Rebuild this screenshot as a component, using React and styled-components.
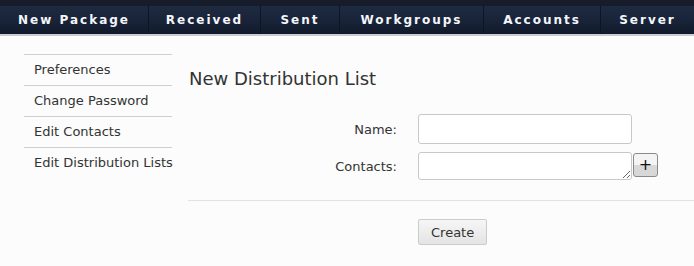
import React from 'react';
import styled, { createGlobalStyle } from 'styled-components';

const Global = createGlobalStyle`
    body {
        margin: 0;
        background: #fbfcfb;
        font-family: "DejaVu Sans", Verdana, sans-serif;
        color: #333;
    }
`;

const NavBar = styled.nav`
    display: flex;
    height: 28px;
    border-top: 6px solid #161c29;
    border-bottom: 2px solid #c9ccd0;
    background: linear-gradient(#1e2a3f, #19243a 50%, #111a2a);
`;

const NavItem = styled.a`
    display: flex;
    align-items: center;
    justify-content: center;
    flex: 0 0 ${p => p.$w}px;
    box-sizing: border-box;
    color: #f4f6fa;
    font-size: 12px;
    font-weight: bold;
    letter-spacing: 2px;
    border-left: ${p => (p.$first ? 'none' : '1px solid #0e1420')};
    white-space: nowrap;
`;

const Body = styled.div`
    display: flex;
    gap: 16px;
    padding: 18px 0 0 24px;
`;

const Side = styled.ul`
    list-style: none;
    margin: 0;
    padding: 0;
    width: 148px;
    flex-shrink: 0;
`;

const SideItem = styled.li`
    height: 30px;
    line-height: 30px;
    padding-left: 10px;
    font-size: 13px;
    color: #333;
    border-top: 1px solid #cfcfcf;
    white-space: nowrap;
`;

const Main = styled.div`
    flex: 1;
`;

const Title = styled.h1`
    margin: 14px 0 25px 1px;
    font-size: 18px;
    font-weight: normal;
    color: #333;
`;

const Form = styled.div`
    display: grid;
    grid-template-columns: 209px 214px auto;
    column-gap: 21px;
    row-gap: 8px;
    align-items: center;
`;

const Label = styled.label`
    text-align: right;
    font-size: 13px;
    color: #333;
`;

const Input = styled.input`
    box-sizing: border-box;
    width: 214px;
    height: 30px;
    border: 1px solid #c8c8c8;
    border-radius: 3px;
    background: #fff;
`;

const Area = styled.textarea`
    box-sizing: border-box;
    width: 214px;
    height: 28px;
    border: 1px solid #c8c8c8;
    border-radius: 3px;
    background: #fff;
    display: block;
`;

const Plus = styled.button`
    align-self: start;
    margin: 1px 0 0 -20px;
    width: 25px;
    height: 24px;
    padding: 0;
    border: 1px solid #8a8a8a;
    border-radius: 3px;
    background: linear-gradient(#f4f4f4 50%, #d8d8d8 50%);
    font-size: 16px;
    line-height: 20px;
    color: #111;
    font-family: "DejaVu Sans", sans-serif;
`;

const Rule = styled.hr`
    margin: 20px 0 18px;
    border: none;
    border-top: 1px solid #e2e2e2;
`;

const Actions = styled.div`
    padding-left: 230px;
`;

const Button = styled.button`
    height: 26px;
    padding: 0 12px;
    border: 1px solid #cbcbcb;
    border-radius: 2px;
    background: linear-gradient(#f6f6f6, #e4e4e4);
    font-family: "DejaVu Sans", sans-serif;
    font-size: 13px;
    color: #333;
`;

const nav = [
    ['New Package', 148],
    ['Received', 112],
    ['Sent', 79],
    ['Workgroups', 144],
    ['Accounts', 117],
    ['Server', 94],
];

const side = ['Preferences', 'Change Password', 'Edit Contacts', 'Edit Distribution Lists'];

export default function App() {
    return (
        <>
            <Global />
            <NavBar>
                {nav.map(([n, w], i) => (
                    <NavItem key={n} $w={w} $first={i === 0}>{n}</NavItem>
                ))}
            </NavBar>
            <Body>
                <Side>
                    {side.map(s => <SideItem key={s}>{s}</SideItem>)}
                </Side>
                <Main>
                    <Title>New Distribution List</Title>
                    <Form>
                        <Label>Name:</Label>
                        <Input />
                        <span />
                        <Label>Contacts:</Label>
                        <Area />
                        <Plus>+</Plus>
                    </Form>
                    <Rule />
                    <Actions>
                        <Button>Create</Button>
                    </Actions>
                </Main>
            </Body>
        </>
    );
}
